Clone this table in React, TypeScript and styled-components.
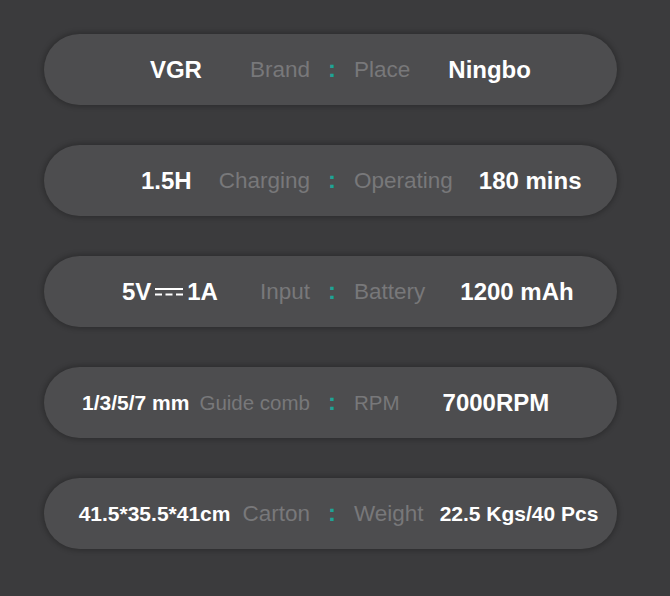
import React from 'react';
import styled, { createGlobalStyle } from 'styled-components';

type Spec = {
  left: React.ReactNode;
  leftLabel: string;
  rightLabel: string;
  right: string;
  leftGap: number;
  rightGap: number;
  leftSmall?: boolean;
  rightSmall?: boolean;
  smallLabel?: boolean;
};

const DcMark = () => (
  <DcSvg width="30" height="12" viewBox="0 0 30 12">
    <line x1="1" y1="3" x2="29" y2="3" stroke="#fff" strokeWidth="2" />
    <line x1="1" y1="8.5" x2="29" y2="8.5" stroke="#fff" strokeWidth="2" strokeDasharray="7 3.5" />
  </DcSvg>
);

const specs: Spec[] = [
  { left: 'VGR', leftLabel: 'Brand', rightLabel: 'Place', right: 'Ningbo', leftGap: 48, rightGap: 38 },
  { left: '1.5H', leftLabel: 'Charging', rightLabel: 'Operating', right: '180 mins', leftGap: 27, rightGap: 26 },
  {
    left: (
      <>
        5V<DcMark />1A
      </>
    ),
    leftLabel: 'Input',
    rightLabel: 'Battery',
    right: '1200 mAh',
    leftGap: 42,
    rightGap: 35,
  },
  { left: '1/3/5/7 mm', leftLabel: 'Guide comb', rightLabel: 'RPM', right: '7000RPM', leftGap: 10, rightGap: 43, leftSmall: true, smallLabel: true },
  { left: '41.5*35.5*41cm', leftLabel: 'Carton', rightLabel: 'Weight', right: '22.5 Kgs/40 Pcs', leftGap: 12, rightGap: 16, leftSmall: true, rightSmall: true },
];

const App = () => {
  return (
    <>
      <GlobalStyle />
      <Page>
        {specs.map((s, i) => (
          <Pill key={i}>
            <LeftSide $gap={s.leftGap}>
              <Value $small={s.leftSmall}>{s.left}</Value>
              <Label $small={s.smallLabel}>{s.leftLabel}</Label>
            </LeftSide>
            <Colon>:</Colon>
            <RightSide $gap={s.rightGap}>
              <Label $small={s.smallLabel}>{s.rightLabel}</Label>
              <Value $small={s.rightSmall}>{s.right}</Value>
            </RightSide>
          </Pill>
        ))}
      </Page>
    </>
  );
};

export default App;

const GlobalStyle = createGlobalStyle`
  html, body {
    margin: 0;
    padding: 0;
    background: #3b3b3d;
  }
  body {
    font-family: 'Liberation Sans', Arial, sans-serif;
  }
`;

const Page = styled.div`
  width: 670px;
  height: 596px;
  box-sizing: border-box;
  padding: 34px 53px 0 44px;
  display: flex;
  flex-direction: column;
  gap: 40px;
  background: #3b3b3d;
`;

const Pill = styled.div`
  height: 71px;
  border-radius: 36px;
  background: #4d4d4f;
  box-shadow: 0 0 5px 2px rgba(0, 0, 0, 0.22);
  display: grid;
  grid-template-columns: 266px 44px 1fr;
  align-items: center;
`;

const LeftSide = styled.div<{ $gap: number }>`
  display: flex;
  justify-content: flex-end;
  align-items: center;
  gap: ${(p) => p.$gap}px;
  white-space: nowrap;
`;

const RightSide = styled.div<{ $gap: number }>`
  display: flex;
  justify-content: flex-start;
  align-items: center;
  gap: ${(p) => p.$gap}px;
  white-space: nowrap;
`;

const Value = styled.span<{ $small?: boolean }>`
  display: inline-flex;
  align-items: center;
  color: #ffffff;
  font-weight: 700;
  font-size: ${(p) => (p.$small ? 21 : 24)}px;
`;

const Label = styled.span<{ $small?: boolean }>`
  color: #78787a;
  font-size: ${(p) => (p.$small ? 20.5 : 22.5)}px;
`;

const Colon = styled.span`
  text-align: center;
  color: #1fa396;
  font-size: 24px;
  font-weight: 700;
  margin-top: -2px;
`;

const DcSvg = styled.svg`
  display: block;
  margin: 0 3px;
`;
